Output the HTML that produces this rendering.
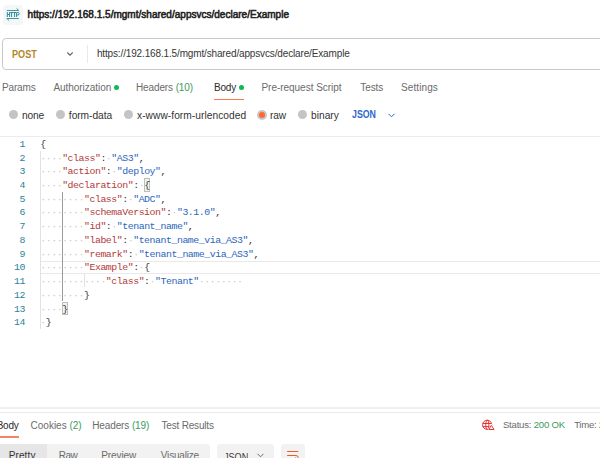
<!DOCTYPE html>
<html><head><meta charset="utf-8">
<style>
html,body{margin:0;padding:0;background:#fff;width:600px;height:458px;overflow:hidden;position:relative;font-family:"Liberation Sans",sans-serif;}
.a{position:absolute;white-space:pre;line-height:20px;}
.dot{position:absolute;width:5px;height:5px;border-radius:50%;background:#0cbb52;}
.rad{position:absolute;width:9.2px;height:9.2px;border-radius:50%;background:#c4c4c4;}
.code{position:absolute;left:40.26px;top:137.9px;font-family:"Liberation Mono",monospace;font-size:9.9px;letter-spacing:-0.46px;line-height:13.72px;white-space:pre;color:#505050;}
.ln{position:absolute;left:0;top:137.9px;width:25px;text-align:right;font-family:"Liberation Mono",monospace;font-size:9.9px;letter-spacing:-0.46px;line-height:13.72px;color:#2f7f9c;white-space:pre;}
.k{color:#b23b3b;}
.v{color:#2b66bb;}
.w{color:#c8c8c8;}
.p{color:#333;}
</style></head><body>

<!-- header -->
<div style="position:absolute;left:3px;top:4.6px;width:20px;height:20px;border-radius:3.5px;background:#f5f6f6;"></div>
<svg style="position:absolute;left:0;top:0" width="26" height="28" viewBox="0 0 26 28">
  <g fill="none" stroke="#2b8c9b" stroke-width="0.9">
    <path d="M6.8 10.5H18.8L16.6 8.4"/>
    <path d="M18.8 18.5H6.8L9.2 20.6"/>
  </g>
  <g fill="none" stroke="#2b8c9b" stroke-width="1">
    <path d="M7.3 12V17M9.6 12V17M7.3 14.5H9.6"/>
    <path d="M10.2 12.5H13M11.6 12.5V17"/>
    <path d="M13.2 12.5H16M14.6 12.5V17"/>
    <path d="M16.6 17V12.5H17.8Q19.2 12.5 19.2 13.75Q19.2 15 17.8 15H16.6"/>
  </g>
</svg>
<div class="a" style="left:27.6px;top:5.0px;font-size:10px;letter-spacing:0.012px;color:#212121;-webkit-text-stroke:0.55px #212121;">https://192.168.1.5/mgmt/shared/appsvcs/declare/Example</div>

<!-- url bar -->
<div style="position:absolute;left:2px;top:38px;width:620px;height:31.5px;border:1px solid #c9c9c9;border-radius:4px;box-sizing:border-box;"></div>
<div class="a" style="left:11.8px;top:45px;font-size:10px;font-weight:bold;color:#b5862a;transform:scaleX(0.91);transform-origin:0 0;">POST</div>
<svg style="position:absolute;left:66px;top:51px" width="9" height="7" viewBox="0 0 9 7"><path d="M1.3 1.5L4 4.1L6.7 1.5" fill="none" stroke="#666" stroke-width="1.15"/></svg>
<div style="position:absolute;left:86.5px;top:45px;width:1.5px;height:18px;background:#e9e9e9;"></div>
<div class="a" style="left:96.91px;top:44.1px;font-size:10px;letter-spacing:-0.145px;color:#363636;">https://192.168.1.5/mgmt/shared/appsvcs/declare/Example</div>

<!-- tabs -->
<div class="a" style="left:1.95px;top:77.5px;font-size:10px;letter-spacing:-0.14px;color:#6b6b6b;">Params</div>
<div class="a" style="left:53.4px;top:77.5px;font-size:10px;letter-spacing:-0.042px;color:#6b6b6b;">Authorization</div>
<div class="a" style="left:135.95px;top:77.5px;font-size:10px;letter-spacing:-0.11px;color:#6b6b6b;">Headers <span style="color:#3c9a5f">(10)</span></div>
<div class="a" style="left:214.05px;top:77.5px;font-size:10px;letter-spacing:-0.222px;color:#2a2a2a;">Body</div>
<div class="a" style="left:261.45px;top:77.5px;font-size:10px;letter-spacing:-0.028px;color:#6b6b6b;">Pre-request Script</div>
<div class="a" style="left:360.29px;top:77.5px;font-size:10px;letter-spacing:-0.087px;color:#6b6b6b;">Tests</div>
<div class="a" style="left:401.06px;top:77.5px;font-size:10px;letter-spacing:0.096px;color:#6b6b6b;">Settings</div>
<div class="dot" style="left:113.8px;top:85px;"></div>
<div class="dot" style="left:239.3px;top:85px;"></div>
<div style="position:absolute;left:214px;top:98.8px;width:30.1px;height:1.4px;background:#fb7a4c;"></div>

<!-- radio row -->
<div class="rad" style="left:9px;top:110.3px;"></div>
<div class="rad" style="left:55.5px;top:110.3px;"></div>
<div class="rad" style="left:123.8px;top:110.3px;"></div>
<div class="rad" style="left:256.9px;top:110.05px;width:10px;height:10px;background:#c3c9cc;"></div>
<div style="position:absolute;left:259.05px;top:112.2px;width:5.8px;height:5.8px;border-radius:50%;background:#ff6a33;"></div>
<div class="rad" style="left:298px;top:110.3px;"></div>
<div class="a" style="left:21.99px;top:105.7px;font-size:10.2px;letter-spacing:-0.133px;color:#333;">none</div>
<div class="a" style="left:68.87px;top:105.7px;font-size:10.2px;letter-spacing:-0.042px;color:#333;">form-data</div>
<div class="a" style="left:137.0px;top:105.7px;font-size:10.2px;letter-spacing:0.051px;color:#333;">x-www-form-urlencoded</div>
<div class="a" style="left:270.09px;top:105.7px;font-size:10.2px;letter-spacing:-0.213px;color:#333;">raw</div>
<div class="a" style="left:311.11px;top:105.7px;font-size:10.2px;letter-spacing:-0.008px;color:#333;">binary</div>
<div class="a" style="left:352px;top:105px;font-size:10px;font-weight:bold;color:#2d68cc;transform:scaleX(0.88);transform-origin:0 0;">JSON</div>
<svg style="position:absolute;left:386.5px;top:111.5px" width="9" height="7" viewBox="0 0 9 7"><path d="M1.5 1.8L4.5 4.8L7.5 1.8" fill="none" stroke="#2d68cc" stroke-width="1"/></svg>

<!-- editor -->
<div style="position:absolute;left:0;top:136px;width:600px;height:1px;background:#ececec;"></div>
<div style="position:absolute;left:40px;top:261px;width:560px;height:11px;border-top:1px solid #e9e9e9;border-bottom:1px solid #e9e9e9;"></div>
<div style="position:absolute;left:40px;top:151px;width:1px;height:178px;background:#e2e2e2;"></div>
<div style="position:absolute;left:62px;top:192px;width:1px;height:109px;background:#9a9a9a;"></div>
<div style="position:absolute;left:84px;top:274px;width:1px;height:13px;background:#e2e2e2;"></div>
<div style="position:absolute;left:144.1px;top:178px;width:5.8px;height:13.7px;border:1px solid #bdbdbd;background:#eef5ee;box-sizing:border-box;"></div>
<div style="position:absolute;left:62.2px;top:301.5px;width:5.8px;height:13.2px;border:1px solid #bdbdbd;background:#eef5ee;box-sizing:border-box;"></div>

<div class="ln">1
2
3
4
5
6
7
8
9
10
11
12
13
14</div>
<div class="code"><span class="p">{</span>
<span class="w">····</span><span class="k">"class"</span><span class="p">:</span><span class="w">·</span><span class="v">"AS3"</span><span class="p">,</span>
<span class="w">····</span><span class="k">"action"</span><span class="p">:</span><span class="w">·</span><span class="v">"deploy"</span><span class="p">,</span>
<span class="w">····</span><span class="k">"declaration"</span><span class="p">:</span><span class="w">·</span><span class="p">{</span>
<span class="w">········</span><span class="k">"class"</span><span class="p">:</span><span class="w">·</span><span class="v">"ADC"</span><span class="p">,</span>
<span class="w">········</span><span class="k">"schemaVersion"</span><span class="p">:</span><span class="w">·</span><span class="v">"3.1.0"</span><span class="p">,</span>
<span class="w">········</span><span class="k">"id"</span><span class="p">:</span><span class="w">·</span><span class="v">"tenant_name"</span><span class="p">,</span>
<span class="w">········</span><span class="k">"label"</span><span class="p">:</span><span class="w">·</span><span class="v">"tenant_name_via_AS3"</span><span class="p">,</span>
<span class="w">········</span><span class="k">"remark"</span><span class="p">:</span><span class="w">·</span><span class="v">"tenant_name_via_AS3"</span><span class="p">,</span>
<span class="w">········</span><span class="k">"Example"</span><span class="p">:</span><span class="w">·</span><span class="p">{</span>
<span class="w">············</span><span class="k">"class"</span><span class="p">:</span><span class="w">·</span><span class="v">"Tenant"</span><span class="w">········</span>
<span class="w">········</span><span class="p">}</span>
<span class="w">····</span><span class="p">}</span>
<span class="w">·</span><span class="p">}</span></div>

<!-- bottom panel -->
<div style="position:absolute;left:0;top:407px;width:600px;height:2px;background:#efefef;"></div>
<div style="position:absolute;left:0;top:412px;width:600px;height:1px;background:#ebebeb;"></div>
<div class="a" style="left:30.62px;top:415.8px;font-size:10px;letter-spacing:-0.018px;color:#6b6b6b;">Cookies <span style="color:#3c9a5f">(2)</span></div>
<div class="a" style="left:92.2px;top:415.8px;font-size:10px;letter-spacing:-0.11px;color:#6b6b6b;">Headers <span style="color:#3c9a5f">(19)</span></div>
<div class="a" style="left:161.44px;top:415.8px;font-size:10px;letter-spacing:-0.175px;color:#6b6b6b;">Test Results</div>
<div class="a" style="left:-3.350000000000012px;top:415.8px;font-size:10px;letter-spacing:-0.222px;color:#2a2a2a;">Body</div>
<div style="position:absolute;left:0;top:436.2px;width:19px;height:1.5px;background:#f3865f;"></div>

<div style="position:absolute;left:0;top:443.5px;width:210.3px;height:20px;background:#f2f2f2;border-radius:0 3px 0 0;"></div>
<div style="position:absolute;left:0;top:443.5px;width:46.8px;height:20px;background:#e6e6e6;"></div>
<div style="position:absolute;left:217px;top:443.6px;width:57.3px;height:20px;background:#f2f2f2;border-radius:3px;"></div>
<svg style="position:absolute;left:256px;top:452px" width="9" height="7" viewBox="0 0 9 7"><path d="M1.5 1.8L4.5 4.8L7.5 1.8" fill="none" stroke="#6b6b6b" stroke-width="1"/></svg>
<div style="position:absolute;left:280.7px;top:443.6px;width:23.9px;height:20px;background:#f2f2f2;border-radius:3px;"></div>
<svg style="position:absolute;left:285px;top:446px" width="16" height="12" viewBox="0 0 16 12"><path d="M2.5 5.5H13M2.5 9.5H11Q13.3 9.5 13.3 11.8V14M10.9 11.6L9.4 13" fill="none" stroke="#e35f2f" stroke-width="1" stroke-linecap="round"/></svg>

<div class="a" style="left:8.7px;top:445.5px;font-size:10px;letter-spacing:0.117px;color:#333;">Pretty</div>
<div class="a" style="left:58.75px;top:445.5px;font-size:10px;letter-spacing:-0.517px;color:#6b6b6b;">Raw</div>
<div class="a" style="left:101.25px;top:445.5px;font-size:10px;letter-spacing:-0.085px;color:#6b6b6b;">Preview</div>
<div class="a" style="left:160.84px;top:445.5px;font-size:10px;letter-spacing:-0.196px;color:#6b6b6b;">Visualize</div>
<div class="a" style="left:223.6px;top:447.5px;font-size:10px;color:#3a3a3a;transform:scaleX(0.91);transform-origin:0 0;">JSON</div>
<svg style="position:absolute;left:478px;top:416px" width="20" height="18" viewBox="0 0 20 18">
  <defs><clipPath id="gc"><path d="M0 0H20V18H0ZM13.4 7.2L8.8 15H18Z" clip-rule="evenodd"/></clipPath></defs>
  <g fill="none" stroke="#e42b2b" stroke-width="0.95" clip-path="url(#gc)">
    <circle cx="9.2" cy="8.8" r="4.6"/>
    <path d="M4.8 7.5H13.6M4.8 10.6H13.6"/>
    <ellipse cx="9.3" cy="8.8" rx="1.6" ry="4.6"/>
  </g>
  <path d="M13.4 9.3L10.8 13.5H16Z" fill="none" stroke="#e42b2b" stroke-width="0.95" stroke-linejoin="round"/>
</svg>
<div class="a" style="left:502.92px;top:415.3px;font-size:9.6px;letter-spacing:-0.215px;color:#6b6b6b;">Status: <span style="color:#3c9a5f">200 OK</span></div>
<div class="a" style="left:574.14px;top:415.3px;font-size:9.6px;letter-spacing:-0.274px;color:#6b6b6b;">Time: <span style="color:#c9a227">2</span></div>
</body></html>
